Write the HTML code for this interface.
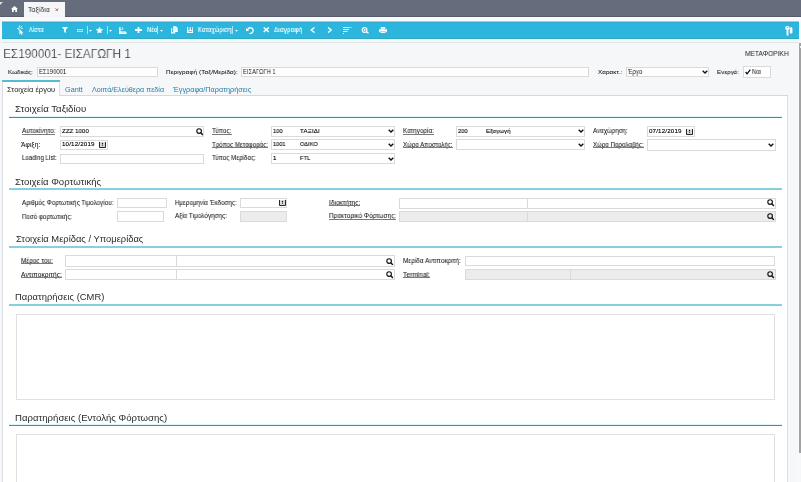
<!DOCTYPE html><html><head><meta charset="utf-8"><style>
*{box-sizing:border-box;margin:0;padding:0}
html,body{width:801px;height:482px;overflow:hidden;background:#f6f7f9;font-family:"Liberation Sans",sans-serif;color:#333;position:relative}
div,span,svg{position:absolute;display:block}
.t{white-space:nowrap;transform-origin:0 50%;will-change:transform}
.inp{background:#fff;border:1px solid #dadada}
.dis{background:#ececec}
</style></head><body>
<div style="left:0;top:0;width:801px;height:17px;background:#656c7b"></div>
<div style="left:0;top:16px;width:801px;height:1px;background:#575d68"></div>
<div style="left:0;top:17px;width:801px;height:4px;background:#f8f9fd"></div>
<svg style="left:0;top:1.5px" width="3" height="3"><path d="M0 0H3L0 3Z" fill="#e0e0e0"/></svg>
<svg style="left:11px;top:6px" width="7" height="6" viewBox="0 0 7 6"><path d="M3.5 0L7 3H6V6H4.3V4H2.7V6H1V3H0Z" fill="#fff"/></svg>
<div style="left:24px;top:2px;width:41px;height:15px;background:#f5f6f8"></div>
<span class="t" style="left:28px;top:4.50px;font-size:7.5px;line-height:10px;height:10px;color:#2a2a2a;letter-spacing:0.2px;transform:translateX(0.00px) scaleX(0.8864)">Ταξίδια</span>
<svg style="left:55.3px;top:7.6px" width="3.6" height="3.6" viewBox="0 0 3.6 3.6"><path d="M0.4 0.4L3.2 3.2M3.2 0.4L0.4 3.2" stroke="#d9302c" stroke-width="0.8"/></svg>
<div style="left:2px;top:21px;width:797px;height:1px;background:#92d8ec"></div>
<div style="left:2px;top:22px;width:797px;height:17px;background:#2cb6de"></div>
<div style="left:2px;top:22px;width:797px;height:1px;background:#2eaad0"></div>
<div style="left:2px;top:38px;width:797px;height:1px;background:#35a5c6"></div>
<div style="left:2px;top:39px;width:797px;height:2px;background:#ebfdfe"></div>
<svg style="left:16px;top:25px" width="8" height="10" viewBox="0 0 8 10"><path d="M3.4 3.9L7.4 7.7L5.7 7.9L6.6 9.4L5.6 9.9L4.7 8.3L3.4 9.6Z" fill="#fff"/><g stroke="#fff" stroke-width="0.9" stroke-linecap="round"><path d="M3.4 0.8V2.2"/><path d="M5.6 1.3L4.8 2.3"/><path d="M1.5 3.4H2.7"/><path d="M6.3 3.4H5.3"/><path d="M2.6 4.6L3 4.3"/></g></svg>
<span class="t" style="left:28.6px;top:25.20px;font-size:7.2px;line-height:10px;height:10px;color:#fff;-webkit-text-stroke:0.12px #fff;letter-spacing:0.3px;transform:translateX(0.00px) scaleX(0.7671)">Λίστα</span>
<svg style="left:62px;top:27px" width="6" height="6" viewBox="0 0 6 6"><path d="M0 0H6L3.8 2.8V6L2.2 5V2.8Z" fill="#fff"/></svg>
<svg style="left:77px;top:28.5px" width="6" height="3.5" viewBox="0 0 6 3.5"><g fill="#fff" opacity="0.85"><rect x="0" y="0" width="1.5" height="1.3"/><rect x="2.2" y="0" width="1.5" height="1.3"/><rect x="4.4" y="0" width="1.5" height="1.3"/><rect x="0" y="2" width="1.5" height="1.3"/><rect x="2.2" y="2" width="1.5" height="1.3"/><rect x="4.4" y="2" width="1.5" height="1.3"/></g></svg>
<div style="left:86.5px;top:26px;width:0.7px;height:7.6px;background:rgba(255,255,255,0.6)"></div>
<svg style="left:88.8px;top:29.5px" width="3" height="2" viewBox="0 0 3 2"><path d="M0 0H3L1.5 1.8Z" fill="#fff"/></svg>
<svg style="left:96.3px;top:26.8px" width="7" height="6.4" viewBox="0 0 7 6.4"><path d="M3.5 0.2L4.4 2.2L6.8 2.5L5 4.1L5.4 6.3L3.5 5.2L1.6 6.3L2 4.1L0.2 2.5L2.6 2.2Z" fill="#fff" stroke="#fff" stroke-width="0.5" stroke-linejoin="round"/></svg>
<div style="left:106.5px;top:26px;width:0.7px;height:7.6px;background:rgba(255,255,255,0.6)"></div>
<svg style="left:108.8px;top:29.5px" width="3" height="2" viewBox="0 0 3 2"><path d="M0 0H3L1.5 1.8Z" fill="#fff"/></svg>
<svg style="left:118.5px;top:26.5px" width="8" height="7.5" viewBox="0 0 8 7.5"><g fill="#fff"><rect x="0.2" y="0.2" width="1.4" height="7"/><rect x="2.8" y="0.5" width="1.4" height="1.2" opacity="0.9"/><rect x="1.6" y="2.3" width="2.8" height="0.7" opacity="0.75"/><path d="M0.2 4.2H6.2L7.6 5.2V7.2H0.2Z" opacity="0.92"/></g><rect x="1.8" y="4.8" width="4.6" height="0.5" fill="#2cb6de" opacity="0.5"/></svg>
<svg style="left:135px;top:27.4px" width="7" height="6" viewBox="0 0 7 6"><path d="M2.6 0H4.4V2.1H7V3.9H4.4V6H2.6V3.9H0V2.1H2.6Z" fill="#fff"/></svg>
<span class="t" style="left:146.6px;top:25.20px;font-size:7.2px;line-height:10px;height:10px;color:#fff;-webkit-text-stroke:0.12px #fff;letter-spacing:0.3px;transform:translateX(0.00px) scaleX(0.7849)">Νέα</span>
<div style="left:157.4px;top:26px;width:0.7px;height:7.6px;background:rgba(255,255,255,0.6)"></div>
<svg style="left:160.3px;top:29.5px" width="3" height="2" viewBox="0 0 3 2"><path d="M0 0H3L1.5 1.8Z" fill="#fff"/></svg>
<svg style="left:170.5px;top:26px" width="7" height="7.5" viewBox="0 0 7 7.5"><path d="M0.6 2.2V6.9H4.3" fill="none" stroke="#fff" stroke-width="1.1"/><path d="M2.2 0.2H5L6.7 1.9V6H2.2Z" fill="#fff"/><path d="M3.2 2.6H5.6M3.2 4H5.6" stroke="#2cb5de" stroke-width="0.4" opacity="0.6"/></svg>
<svg style="left:186.8px;top:27px" width="6.5" height="6" viewBox="0 0 6.5 6"><path d="M0 0H1.2V3.3H2.7V0.2H3.8V3.3H5.3V0H6.5V6H0Z" fill="#fff"/><rect x="1.3" y="4.1" width="3.9" height="0.8" fill="#1f9cc0" opacity="0.8"/></svg>
<span class="t" style="left:198px;top:25.20px;font-size:7.2px;line-height:10px;height:10px;color:#fff;-webkit-text-stroke:0.12px #fff;letter-spacing:0.3px;transform:translateX(0.00px) scaleX(0.8021)">Καταχώριση</span>
<div style="left:232.2px;top:26px;width:0.7px;height:7.6px;background:rgba(255,255,255,0.6)"></div>
<svg style="left:235.3px;top:29.5px" width="3" height="2" viewBox="0 0 3 2"><path d="M0 0H3L1.5 1.8Z" fill="#fff"/></svg>
<svg style="left:245.5px;top:27px" width="8" height="7" viewBox="0 0 8 7"><path d="M1.6 2.8A2.8 2.8 0 1 1 3.5 6.3" fill="none" stroke="#fff" stroke-width="1.3"/><path d="M0 1V4H3Z" fill="#fff"/></svg>
<svg style="left:263px;top:27.3px" width="6.5" height="5.5" viewBox="0 0 6.5 5.5"><path d="M0.7 0.5L5.8 5M5.8 0.5L0.7 5" stroke="#fff" stroke-width="1.5"/></svg>
<span class="t" style="left:273.8px;top:25.20px;font-size:7.2px;line-height:10px;height:10px;color:#fff;-webkit-text-stroke:0.12px #fff;letter-spacing:0.3px;transform:translateX(0.00px) scaleX(0.8506)">Διαγραφή</span>
<svg style="left:309.5px;top:27.3px" width="5.5" height="6" viewBox="0 0 5.5 6"><path d="M4.5 0.5L1.2 3L4.5 5.5" fill="none" stroke="#fff" stroke-width="1.4"/></svg>
<svg style="left:326.5px;top:27.3px" width="5.5" height="6" viewBox="0 0 5.5 6"><path d="M1 0.5L4.3 3L1 5.5" fill="none" stroke="#fff" stroke-width="1.4"/></svg>
<svg style="left:343px;top:27px" width="9" height="7" viewBox="0 0 9 7"><g fill="#fff" opacity="0.88"><rect x="0" y="0" width="6.5" height="1"/><rect x="7.5" y="0" width="1" height="1"/><rect x="0" y="2" width="6" height="1"/><rect x="0" y="4" width="4.5" height="1"/><rect x="0" y="6" width="1" height="1"/></g></svg>
<svg style="left:360.5px;top:27.2px" width="8.5" height="6.5" viewBox="0 0 8.5 6.5"><circle cx="3.6" cy="3" r="2.4" fill="none" stroke="#fff" stroke-width="1.1"/><circle cx="3.6" cy="3" r="0.9" fill="#fff"/><path d="M5.4 4.7L7.5 6.3" stroke="#fff" stroke-width="1.2"/></svg>
<svg style="left:378.5px;top:26.8px" width="8" height="6.5" viewBox="0 0 8 6.5"><g fill="#fff"><rect x="1.8" y="0" width="4.4" height="1.8"/><path d="M0 2.3H8V5.2H6.6V4.2H1.4V5.2H0Z"/><rect x="1.8" y="4.6" width="4.4" height="1.9"/></g></svg>
<svg style="left:785px;top:25.5px" width="8" height="10" viewBox="0 0 8 10"><g fill="#fff"><ellipse cx="2.4" cy="2" rx="2.3" ry="1.9"/><rect x="1.6" y="2.8" width="1.8" height="6.7"/><rect x="4.8" y="1.2" width="2.6" height="6.3" rx="1.2"/></g><rect x="1.7" y="1.1" width="1.5" height="0.7" fill="#5a8fa0"/><path d="M4.5 4.5L5.2 3.6" stroke="#2cb5de" stroke-width="0.5"/></svg>
<div style="left:2px;top:42px;width:797px;height:1px;background:#e1e3e6"></div>
<div style="left:797.5px;top:43px;width:1.5px;height:439px;background:#fbfbfb"></div>
<div style="left:799px;top:43px;width:2px;height:410px;background:#a2a2a2"></div>
<div style="left:800px;top:46px;width:1px;height:2px;background:#f0f0f0"></div>
<span class="t" style="left:3.5px;top:45.60px;font-size:13.2px;line-height:16px;height:16px;color:#2a2a2a;-webkit-text-stroke:0.22px #f6f7f9;transform:translateX(-0.89px) scaleX(0.8909)">ΕΣ190001- ΕΙΣΑΓΩΓΗ 1</span>
<span class="t" style="left:744.6px;top:49.20px;font-size:7px;line-height:10px;height:10px;color:#1a1a1a;transform:translateX(0.00px) scaleX(0.9493)">ΜΕΤΑΦΟΡΙΚΗ</span>
<span class="t" style="left:8px;top:66.60px;font-size:6.2px;line-height:10px;height:10px;color:#111;-webkit-text-stroke:0.06px #111;letter-spacing:0.1px;transform:translateX(0.00px) scaleX(0.9751)">Κωδικός:</span>
<div class="inp" style="left:37px;top:67px;width:121px;height:10px"></div>
<span class="t" style="left:38.5px;top:66.70px;font-size:6.6px;line-height:10px;height:10px;color:#111;letter-spacing:0.15px;transform:translateX(0.00px) scaleX(0.8632)">ΕΣ190001</span>
<span class="t" style="left:166px;top:66.60px;font-size:6.2px;line-height:10px;height:10px;color:#111;-webkit-text-stroke:0.06px #111;letter-spacing:0.1px;transform:translateX(0.00px) scaleX(1.0170)">Περιγραφή (Ταξ/Μερίδα):</span>
<div class="inp" style="left:241px;top:67px;width:348px;height:10px"></div>
<span class="t" style="left:243px;top:66.70px;font-size:6.6px;line-height:10px;height:10px;color:#111;letter-spacing:0.15px;transform:translateX(0.00px) scaleX(0.8496)">ΕΙΣΑΓΩΓΗ 1</span>
<span class="t" style="left:597.6px;top:66.60px;font-size:6.2px;line-height:10px;height:10px;color:#111;-webkit-text-stroke:0.06px #111;letter-spacing:0.1px;transform:translateX(0.00px) scaleX(1.0017)">Χαρακτ.:</span>
<div class="inp" style="left:626px;top:67px;width:83px;height:10px"></div>
<span class="t" style="left:627px;top:66.70px;font-size:6.6px;line-height:10px;height:10px;color:#111;letter-spacing:0.15px;transform:translateX(0.88px) scaleX(0.8773)">Έργο</span>
<svg style="left:702px;top:70.3px" width="6" height="4" viewBox="0 0 6 4"><path d="M0.7 0.7L3 3L5.3 0.7" fill="none" stroke="#111" stroke-width="1.4"/></svg>
<span class="t" style="left:717px;top:66.60px;font-size:6.2px;line-height:10px;height:10px;color:#111;-webkit-text-stroke:0.06px #111;letter-spacing:0.1px;transform:translateX(0.00px) scaleX(0.9808)">Ενεργό:</span>
<div class="inp" style="left:743px;top:66px;width:28px;height:12px"></div>
<svg style="left:744.5px;top:68.8px" width="6" height="6" viewBox="0 0 6 6"><path d="M0.6 3L2.1 4.8L5.3 0.7" fill="none" stroke="#000" stroke-width="1.2"/></svg>
<span class="t" style="left:752px;top:67.00px;font-size:6.6px;line-height:10px;height:10px;color:#111;letter-spacing:0.15px;transform:translateX(0.00px) scaleX(0.8645)">Ναι</span>
<div style="left:60px;top:95px;width:728px;height:1px;background:#d6d8db"></div>
<div style="left:2px;top:80px;width:58px;height:17px;background:#fff;border-left:1px solid #dcdfe3;border-right:1px solid #dcdfe3"></div>
<div style="left:2px;top:80px;width:58px;height:2px;background:#56bcd6"></div>
<span class="t" style="left:6.8px;top:85.30px;font-size:7.0px;line-height:10px;height:10px;color:#222;transform:translateX(0.00px) scaleX(1.0769)">Στοιχεία έργου</span>
<span class="t" style="left:65px;top:85.30px;font-size:7.0px;line-height:10px;height:10px;color:#267fa5;transform:translateX(0.00px) scaleX(1.0363)">Gantt</span>
<span class="t" style="left:91.7px;top:85.30px;font-size:7.0px;line-height:10px;height:10px;color:#267fa5;transform:translateX(0.00px) scaleX(1.0234)">Λοιπά/Ελεύθερα πεδία</span>
<span class="t" style="left:171.5px;top:85.30px;font-size:7.0px;line-height:10px;height:10px;color:#267fa5;transform:translateX(1.04px) scaleX(1.0403)">Έγγραφα/Παρατηρήσεις</span>
<div style="left:2px;top:96px;width:786px;height:390px;background:#fff;border-left:1px solid #dcdfe3;border-right:1px solid #dcdfe3"></div>
<span class="t" style="left:15.4px;top:102.00px;font-size:9px;line-height:14px;height:14px;color:#2a2a2a;transform:translateX(0.00px) scaleX(1.0710)">Στοιχεία Ταξιδίου</span>
<div style="left:9px;top:116px;width:773px;height:1px;background:#d9f6f9"></div>
<div style="left:9px;top:117px;width:773px;height:1.3px;background:#4a8d9f"></div>
<span class="t" style="left:21.7px;top:126.10px;font-size:6.6px;line-height:10px;height:10px;color:#111;-webkit-text-stroke:0.05px #111;letter-spacing:0.1px;transform:translateX(0.00px) scaleX(0.9605)">Αυτοκίνητο:</span>
<div style="left:21.7px;top:134px;width:33.7px;height:1px;background:#7a7a7a"></div>
<div class="inp" style="left:60px;top:126px;width:144px;height:11px"></div>
<span class="t" style="left:61.7px;top:125.50px;font-size:6.2px;line-height:10px;height:10px;color:#000;-webkit-text-stroke:0.12px #000;letter-spacing:0.15px;transform:translateX(0.00px) scaleX(0.9602)">ZZZ 1000</span>
<svg style="left:195.5px;top:128px" width="7.5" height="7.5" viewBox="0 0 7.5 7.5"><circle cx="3.1" cy="3.1" r="2.3" fill="none" stroke="#111" stroke-width="1.1"/><path d="M4.8 4.8L6.9 6.9" stroke="#111" stroke-width="1.4"/></svg>
<span class="t" style="left:21px;top:139.60px;font-size:6.6px;line-height:10px;height:10px;color:#111;-webkit-text-stroke:0.05px #111;letter-spacing:0.1px;transform:translateX(0.00px) scaleX(1.0124)">Άφιξη:</span>
<div class="inp" style="left:60px;top:140px;width:48px;height:10px"></div>
<span class="t" style="left:62px;top:139.30px;font-size:6.2px;line-height:10px;height:10px;color:#000;-webkit-text-stroke:0.12px #000;letter-spacing:0.15px;transform:translateX(0.00px) scaleX(1.0038)">10/12/2019</span>
<svg style="left:99px;top:142px" width="7" height="6" viewBox="0 0 7 6"><rect x="0.6" y="0.2" width="5.8" height="5.2" fill="#d8d8d8"/><path d="M0.5 0V5.5H6.5V0" fill="none" stroke="#111" stroke-width="0.9"/><circle cx="3.5" cy="1.4" r="0.65" fill="#111"/><circle cx="3.5" cy="3.1" r="0.65" fill="#111"/></svg>
<span class="t" style="left:22px;top:153.30px;font-size:6.6px;line-height:10px;height:10px;color:#111;-webkit-text-stroke:0.05px #111;letter-spacing:0.1px;transform:translateX(0.00px) scaleX(0.9030)">Loading List:</span>
<div class="inp" style="left:60px;top:154px;width:144px;height:10px"></div>
<span class="t" style="left:212.2px;top:126.10px;font-size:6.6px;line-height:10px;height:10px;color:#111;-webkit-text-stroke:0.05px #111;letter-spacing:0.1px;transform:translateX(0.00px) scaleX(0.9348)">Τύπος:</span>
<div style="left:212.2px;top:134px;width:19.5px;height:1px;background:#7a7a7a"></div>
<div class="inp" style="left:271px;top:126px;width:124px;height:11px"></div>
<span class="t" style="left:273px;top:125.50px;font-size:6.2px;line-height:10px;height:10px;color:#000;-webkit-text-stroke:0.12px #000;letter-spacing:0.15px;transform:translateX(0.00px) scaleX(0.8943)">100</span>
<span class="t" style="left:300px;top:125.50px;font-size:6.2px;line-height:10px;height:10px;color:#000;-webkit-text-stroke:0.12px #000;letter-spacing:0.15px;transform:translateX(0.00px) scaleX(0.9965)">ΤΑΞΙΔΙ</span>
<svg style="left:387.5px;top:129.3px" width="6" height="4" viewBox="0 0 6 4"><path d="M0.7 0.7L3 3L5.3 0.7" fill="none" stroke="#111" stroke-width="1.4"/></svg>
<span class="t" style="left:212.2px;top:139.60px;font-size:6.6px;line-height:10px;height:10px;color:#111;-webkit-text-stroke:0.05px #111;letter-spacing:0.1px;transform:translateX(0.00px) scaleX(0.9102)">Τρόπος Μεταφοράς:</span>
<div style="left:212.2px;top:147px;width:56px;height:1px;background:#7a7a7a"></div>
<div class="inp" style="left:271px;top:139px;width:124px;height:11px"></div>
<span class="t" style="left:273px;top:139.00px;font-size:6.2px;line-height:10px;height:10px;color:#000;-webkit-text-stroke:0.12px #000;letter-spacing:0.15px;transform:translateX(0.00px) scaleX(0.8799)">1001</span>
<span class="t" style="left:300px;top:139.00px;font-size:6.2px;line-height:10px;height:10px;color:#000;-webkit-text-stroke:0.12px #000;letter-spacing:0.15px;transform:translateX(0.00px) scaleX(0.8968)">ΟΔΙΚΟ</span>
<svg style="left:387.5px;top:142.8px" width="6" height="4" viewBox="0 0 6 4"><path d="M0.7 0.7L3 3L5.3 0.7" fill="none" stroke="#111" stroke-width="1.4"/></svg>
<span class="t" style="left:212.2px;top:153.20px;font-size:6.6px;line-height:10px;height:10px;color:#111;-webkit-text-stroke:0.05px #111;letter-spacing:0.1px;transform:translateX(0.00px) scaleX(0.9205)">Τύπος Μερίδας:</span>
<div class="inp" style="left:271px;top:153px;width:124px;height:11px"></div>
<span class="t" style="left:273px;top:152.60px;font-size:6.2px;line-height:10px;height:10px;color:#000;-webkit-text-stroke:0.12px #000;letter-spacing:0.15px;transform:translateX(0.00px) scaleX(1.0000)">1</span>
<span class="t" style="left:300px;top:152.60px;font-size:6.2px;line-height:10px;height:10px;color:#000;-webkit-text-stroke:0.12px #000;letter-spacing:0.15px;transform:translateX(0.00px) scaleX(0.9276)">FTL</span>
<svg style="left:387.5px;top:156.5px" width="6" height="4" viewBox="0 0 6 4"><path d="M0.7 0.7L3 3L5.3 0.7" fill="none" stroke="#111" stroke-width="1.4"/></svg>
<span class="t" style="left:403px;top:126.10px;font-size:6.6px;line-height:10px;height:10px;color:#111;-webkit-text-stroke:0.05px #111;letter-spacing:0.1px;transform:translateX(0.00px) scaleX(0.9311)">Κατηγορία:</span>
<div style="left:403px;top:134px;width:31px;height:1px;background:#7a7a7a"></div>
<div class="inp" style="left:456px;top:126px;width:129px;height:11px"></div>
<span class="t" style="left:458px;top:125.50px;font-size:6.2px;line-height:10px;height:10px;color:#000;-webkit-text-stroke:0.12px #000;letter-spacing:0.15px;transform:translateX(0.00px) scaleX(0.8943)">200</span>
<span class="t" style="left:486px;top:125.50px;font-size:6.2px;line-height:10px;height:10px;color:#000;-webkit-text-stroke:0.12px #000;letter-spacing:0.15px;transform:translateX(0.00px) scaleX(0.9532)">Εξαγωγή</span>
<svg style="left:577.7px;top:129.3px" width="6" height="4" viewBox="0 0 6 4"><path d="M0.7 0.7L3 3L5.3 0.7" fill="none" stroke="#111" stroke-width="1.4"/></svg>
<span class="t" style="left:403px;top:139.60px;font-size:6.6px;line-height:10px;height:10px;color:#111;-webkit-text-stroke:0.05px #111;letter-spacing:0.1px;transform:translateX(0.00px) scaleX(0.9070)">Χώρα Αποστολής:</span>
<div style="left:403px;top:147px;width:50px;height:1px;background:#7a7a7a"></div>
<div class="inp" style="left:456px;top:139px;width:129px;height:11px"></div>
<svg style="left:577.7px;top:142.8px" width="6" height="4" viewBox="0 0 6 4"><path d="M0.7 0.7L3 3L5.3 0.7" fill="none" stroke="#111" stroke-width="1.4"/></svg>
<span class="t" style="left:593px;top:126.10px;font-size:6.6px;line-height:10px;height:10px;color:#111;-webkit-text-stroke:0.05px #111;letter-spacing:0.1px;transform:translateX(0.00px) scaleX(0.9241)">Αναχώρηση:</span>
<div class="inp" style="left:647px;top:126px;width:48px;height:11px"></div>
<span class="t" style="left:649px;top:125.50px;font-size:6.2px;line-height:10px;height:10px;color:#000;-webkit-text-stroke:0.12px #000;letter-spacing:0.15px;transform:translateX(0.00px) scaleX(1.0038)">07/12/2019</span>
<svg style="left:686px;top:128.5px" width="7" height="6" viewBox="0 0 7 6"><rect x="0.6" y="0.2" width="5.8" height="5.2" fill="#d8d8d8"/><path d="M0.5 0V5.5H6.5V0" fill="none" stroke="#111" stroke-width="0.9"/><circle cx="3.5" cy="1.4" r="0.65" fill="#111"/><circle cx="3.5" cy="3.1" r="0.65" fill="#111"/></svg>
<span class="t" style="left:593.3px;top:139.60px;font-size:6.6px;line-height:10px;height:10px;color:#111;-webkit-text-stroke:0.05px #111;letter-spacing:0.1px;transform:translateX(0.00px) scaleX(0.9034)">Χώρα Παραλαβής:</span>
<div style="left:593.3px;top:147px;width:50.7px;height:1px;background:#7a7a7a"></div>
<div class="inp" style="left:647px;top:139px;width:129px;height:12px"></div>
<svg style="left:768px;top:142.8px" width="6" height="4" viewBox="0 0 6 4"><path d="M0.7 0.7L3 3L5.3 0.7" fill="none" stroke="#111" stroke-width="1.4"/></svg>
<span class="t" style="left:15.4px;top:174.50px;font-size:9px;line-height:14px;height:14px;color:#2a2a2a;transform:translateX(0.00px) scaleX(1.0653)">Στοιχεία Φορτωτικής</span>
<div style="left:9px;top:188px;width:773px;height:2px;background:#8acfe0"></div>
<span class="t" style="left:21.9px;top:198.10px;font-size:6.6px;line-height:10px;height:10px;color:#111;-webkit-text-stroke:0.05px #111;letter-spacing:0.1px;transform:translateX(0.00px) scaleX(0.9325)">Αριθμός Φορτωτικής Τιμολογίου:</span>
<div class="inp" style="left:117px;top:198px;width:50px;height:10px"></div>
<span class="t" style="left:21.9px;top:211.60px;font-size:6.6px;line-height:10px;height:10px;color:#111;-webkit-text-stroke:0.05px #111;letter-spacing:0.1px;transform:translateX(0.00px) scaleX(0.9166)">Ποσό φορτωτικής:</span>
<div class="inp" style="left:117px;top:211px;width:47px;height:11px"></div>
<span class="t" style="left:175.2px;top:197.70px;font-size:6.6px;line-height:10px;height:10px;color:#111;-webkit-text-stroke:0.05px #111;letter-spacing:0.1px;transform:translateX(0.00px) scaleX(0.9178)">Ημερομηνία Έκδοσης:</span>
<div class="inp" style="left:240px;top:198px;width:47px;height:10px"></div>
<svg style="left:279px;top:199.8px" width="7" height="6" viewBox="0 0 7 6"><rect x="0.6" y="0.2" width="5.8" height="5.2" fill="#d8d8d8"/><path d="M0.5 0V5.5H6.5V0" fill="none" stroke="#111" stroke-width="0.9"/><circle cx="3.5" cy="1.4" r="0.65" fill="#111"/><circle cx="3.5" cy="3.1" r="0.65" fill="#111"/></svg>
<span class="t" style="left:175.2px;top:211.40px;font-size:6.6px;line-height:10px;height:10px;color:#111;-webkit-text-stroke:0.05px #111;letter-spacing:0.1px;transform:translateX(0.00px) scaleX(0.9424)">Αξία Τιμολόγησης:</span>
<div class="inp dis" style="left:240px;top:211px;width:47px;height:11px"></div>
<span class="t" style="left:328.6px;top:197.70px;font-size:6.6px;line-height:10px;height:10px;color:#111;-webkit-text-stroke:0.05px #111;letter-spacing:0.1px;transform:translateX(0.00px) scaleX(0.9616)">Ιδιοκτήτης:</span>
<div style="left:328.6px;top:205px;width:31.4px;height:1px;background:#7a7a7a"></div>
<div class="inp" style="left:399px;top:198px;width:129px;height:11px"></div>
<div class="inp" style="left:527px;top:198px;width:249px;height:11px"></div>
<svg style="left:767px;top:199px" width="7.5" height="7.5" viewBox="0 0 7.5 7.5"><circle cx="3.1" cy="3.1" r="2.3" fill="none" stroke="#111" stroke-width="1.1"/><path d="M4.8 4.8L6.9 6.9" stroke="#111" stroke-width="1.4"/></svg>
<span class="t" style="left:328.6px;top:211.40px;font-size:6.6px;line-height:10px;height:10px;color:#111;-webkit-text-stroke:0.05px #111;letter-spacing:0.1px;transform:translateX(0.00px) scaleX(0.9493)">Πρακτορικό Φόρτωσης:</span>
<div style="left:328.6px;top:219px;width:67.2px;height:1px;background:#7a7a7a"></div>
<div class="inp dis" style="left:399px;top:211px;width:129px;height:11px"></div>
<div class="inp dis" style="left:527px;top:211px;width:249px;height:11px"></div>
<svg style="left:767px;top:212.5px" width="7.5" height="7.5" viewBox="0 0 7.5 7.5"><circle cx="3.1" cy="3.1" r="2.3" fill="none" stroke="#111" stroke-width="1.1"/><path d="M4.8 4.8L6.9 6.9" stroke="#111" stroke-width="1.4"/></svg>
<span class="t" style="left:15.6px;top:232.20px;font-size:9px;line-height:14px;height:14px;color:#2a2a2a;transform:translateX(0.00px) scaleX(1.0397)">Στοιχεία Μερίδας / Υπομερίδας</span>
<div style="left:9px;top:246px;width:773px;height:2px;background:#8acfe0"></div>
<span class="t" style="left:21px;top:255.90px;font-size:6.6px;line-height:10px;height:10px;color:#111;-webkit-text-stroke:0.05px #111;letter-spacing:0.1px;transform:translateX(0.00px) scaleX(0.9540)">Μέρος του:</span>
<div style="left:21px;top:263px;width:32px;height:1px;background:#7a7a7a"></div>
<div class="inp" style="left:65px;top:255px;width:112px;height:12px"></div>
<div class="inp" style="left:176px;top:255px;width:219px;height:12px"></div>
<svg style="left:386px;top:257.5px" width="7.5" height="7.5" viewBox="0 0 7.5 7.5"><circle cx="3.1" cy="3.1" r="2.3" fill="none" stroke="#111" stroke-width="1.1"/><path d="M4.8 4.8L6.9 6.9" stroke="#111" stroke-width="1.4"/></svg>
<span class="t" style="left:21px;top:269.60px;font-size:6.6px;line-height:10px;height:10px;color:#111;-webkit-text-stroke:0.05px #111;letter-spacing:0.1px;transform:translateX(0.00px) scaleX(1.0017)">Αντιποκριτής:</span>
<div style="left:21px;top:277px;width:41px;height:1px;background:#7a7a7a"></div>
<div class="inp" style="left:65px;top:269px;width:112px;height:11px"></div>
<div class="inp" style="left:176px;top:269px;width:219px;height:11px"></div>
<svg style="left:386px;top:271px" width="7.5" height="7.5" viewBox="0 0 7.5 7.5"><circle cx="3.1" cy="3.1" r="2.3" fill="none" stroke="#111" stroke-width="1.1"/><path d="M4.8 4.8L6.9 6.9" stroke="#111" stroke-width="1.4"/></svg>
<span class="t" style="left:403px;top:255.90px;font-size:6.6px;line-height:10px;height:10px;color:#111;-webkit-text-stroke:0.05px #111;letter-spacing:0.1px;transform:translateX(0.00px) scaleX(0.9492)">Μερίδα Αντιποκριτή:</span>
<div class="inp" style="left:465px;top:256px;width:310px;height:10px"></div>
<span class="t" style="left:403px;top:269.50px;font-size:6.6px;line-height:10px;height:10px;color:#111;-webkit-text-stroke:0.05px #111;letter-spacing:0.1px;transform:translateX(0.00px) scaleX(0.9742)">Terminal:</span>
<div style="left:403px;top:277px;width:27px;height:1px;background:#7a7a7a"></div>
<div class="inp dis" style="left:465px;top:269px;width:106px;height:11px"></div>
<div class="inp dis" style="left:570px;top:269px;width:206px;height:11px"></div>
<svg style="left:767px;top:271px" width="7.5" height="7.5" viewBox="0 0 7.5 7.5"><circle cx="3.1" cy="3.1" r="2.3" fill="none" stroke="#111" stroke-width="1.1"/><path d="M4.8 4.8L6.9 6.9" stroke="#111" stroke-width="1.4"/></svg>
<span class="t" style="left:15.4px;top:289.70px;font-size:9px;line-height:14px;height:14px;color:#2a2a2a;transform:translateX(0.00px) scaleX(1.0431)">Παρατηρήσεις (CMR)</span>
<div style="left:9px;top:304px;width:773px;height:2px;background:#8acfe0"></div>
<div class="inp" style="left:16px;top:314px;width:759px;height:86px;border-color:#e0e0e0"></div>
<span class="t" style="left:15.3px;top:410.60px;font-size:9px;line-height:14px;height:14px;color:#2a2a2a;transform:translateX(0.00px) scaleX(1.0655)">Παρατηρήσεις (Εντολής Φόρτωσης)</span>
<div style="left:9px;top:424px;width:773px;height:1px;background:#d9f6f9"></div>
<div style="left:9px;top:425px;width:773px;height:1.3px;background:#4a8d9f"></div>
<div class="inp" style="left:16px;top:434px;width:759px;height:60px;border-color:#e0e0e0"></div>
</body></html>
